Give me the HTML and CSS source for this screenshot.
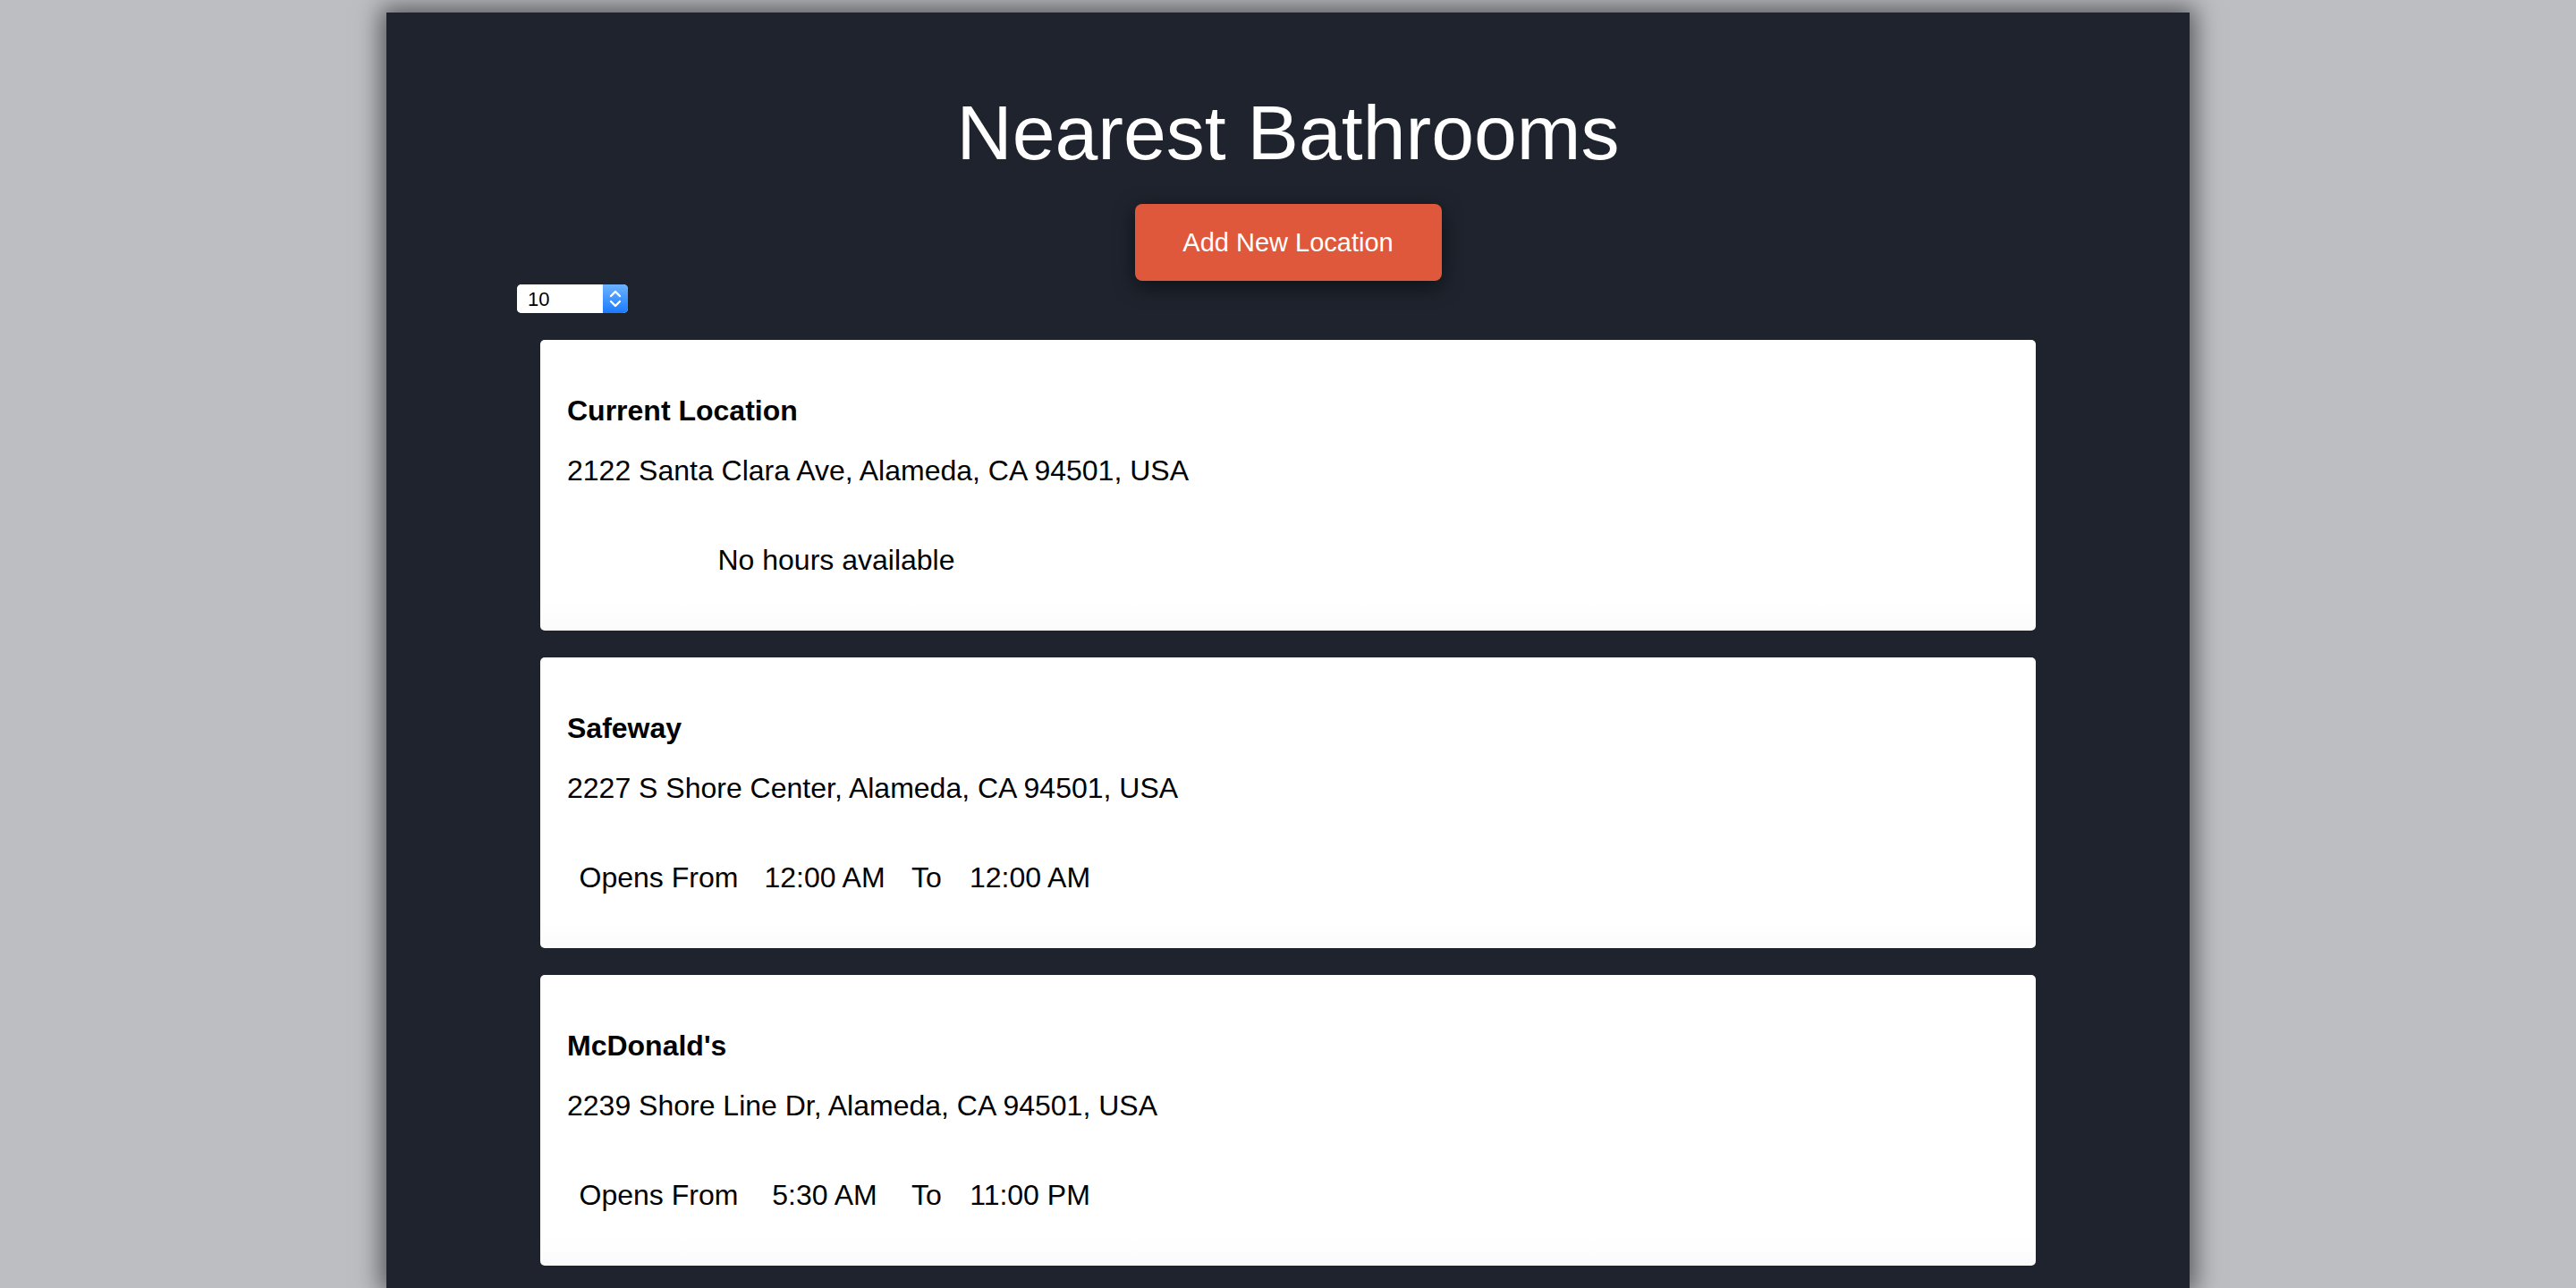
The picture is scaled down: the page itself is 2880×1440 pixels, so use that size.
FILE: index.html
```html
<!DOCTYPE html>
<html lang="en">
<head>
<meta charset="utf-8">
<title>Nearest Bathrooms</title>
<link rel="stylesheet" href="styles.css">
</head>
<body>
<main class="panel">
  <h1 class="title">Nearest Bathrooms</h1>
  <button class="add-btn" type="button">Add New Location</button>
  <div class="toolbar">
    <div class="picker">
      <select class="picker-select">
        <option>10</option>
        <option>20</option>
        <option>50</option>
      </select>
      <span class="picker-arrows">
        <svg width="28" height="32" viewBox="0 0 28 32" aria-hidden="true">
          <path d="M9 13 L14 8 L19 13" fill="none" stroke="#fff" stroke-width="2.4" stroke-linecap="round" stroke-linejoin="round"/>
          <path d="M9 19 L14 24 L19 19" fill="none" stroke="#fff" stroke-width="2.4" stroke-linecap="round" stroke-linejoin="round"/>
        </svg>
      </span>
    </div>
  </div>
  <section class="cards">
    <article class="card">
      <h3 class="card-name">Current Location</h3>
      <p class="card-address">2122 Santa Clara Ave, Alameda, CA 94501, USA</p>
      <table class="hours">
        <tr><td colspan="4">No hours available</td></tr>
      </table>
    </article>
    <article class="card">
      <h3 class="card-name">Safeway</h3>
      <p class="card-address">2227 S Shore Center, Alameda, CA 94501, USA</p>
      <table class="hours">
        <colgroup><col class="c1"><col class="c2"><col class="c3"><col class="c4"></colgroup>
        <tr><td>Opens From</td><td>12:00 AM</td><td>To</td><td>12:00 AM</td></tr>
      </table>
    </article>
    <article class="card">
      <h3 class="card-name">McDonald's</h3>
      <p class="card-address">2239 Shore Line Dr, Alameda, CA 94501, USA</p>
      <table class="hours">
        <colgroup><col class="c1"><col class="c2"><col class="c3"><col class="c4"></colgroup>
        <tr><td>Opens From</td><td>5:30 AM</td><td>To</td><td>11:00 PM</td></tr>
      </table>
    </article>
  </section>
</main>
</body>
</html>
```
FILE: styles.css
```css
html, body {
  margin: 0;
  padding: 0;
}

body {
  background: #bdbec2;
  font-family: "Liberation Sans", Arial, Helvetica, sans-serif;
  overflow: hidden;
  height: 1440px;
}

.panel {
  box-sizing: border-box;
  width: 2016px;
  height: 1426px;
  margin: 14px auto 0;
  background: #1e232d;
  box-shadow: 0 0 26px 6px rgba(0, 0, 0, 0.55);
  display: flex;
  flex-direction: column;
  align-items: center;
  overflow: hidden;
}

.title {
  margin: 91px 0 0;
  font-size: 86px;
  line-height: 86px;
  font-weight: normal;
  color: #ffffff;
  text-align: center;
}

.add-btn {
  margin-top: 37px;
  width: 343px;
  height: 86px;
  flex: none;
  border: none;
  border-radius: 8px;
  background: #e0583b;
  color: #ffffff;
  font-family: "Liberation Sans", Arial, Helvetica, sans-serif;
  font-size: 29px;
  box-shadow: 0 6px 22px rgba(0, 0, 0, 0.55);
  cursor: pointer;
}

.toolbar {
  align-self: stretch;
  padding-left: 146px;
  margin-top: 4px;
}

.picker {
  display: inline-flex;
  height: 32px;
  width: 124px;
  border-radius: 5px;
  overflow: hidden;
  background: #ffffff;
}

.picker-select {
  appearance: none;
  -webkit-appearance: none;
  border: none;
  outline: none;
  background: #ffffff;
  width: 96px;
  height: 32px;
  padding: 0 0 0 12px;
  margin: 0;
  font-family: "Liberation Sans", Arial, Helvetica, sans-serif;
  font-size: 22px;
  color: #000;
}

.picker-arrows {
  width: 28px;
  height: 32px;
  background: linear-gradient(#6cb2ff, #1a7bff);
  display: flex;
}

.cards {
  width: 1672px;
  margin-top: 30px;
  display: flex;
  flex-direction: column;
  gap: 30px;
  flex: none;
}

.card {
  box-sizing: border-box;
  height: 325px;
  padding: 0 30px;
  background: linear-gradient(#ffffff 90%, #fbfbfb);
  border-radius: 5px;
  overflow: hidden;
  color: #000;
}

.card-name {
  margin: 61px 0 0;
  font-size: 32px;
  line-height: 37px;
  font-weight: bold;
}

.card-address {
  margin: 30px 0 0;
  font-size: 32px;
  line-height: 37px;
}

.hours {
  margin-top: 63px;
  width: 602px;
  border-collapse: collapse;
  table-layout: fixed;
  font-size: 32px;
  line-height: 37px;
}

.hours td {
  padding: 0;
  text-align: center;
  white-space: nowrap;
}

.c1 { width: 205px; }
.c2 { width: 166px; }
.c3 { width: 62px; }
.c4 { width: 169px; }
```
